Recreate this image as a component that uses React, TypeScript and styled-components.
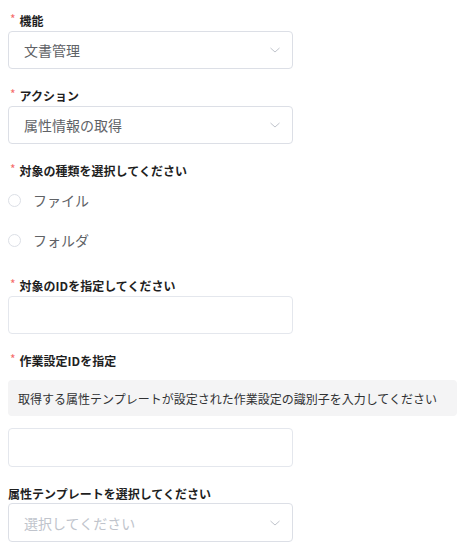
import React from "react";
import styled, { createGlobalStyle } from "styled-components";

const Global = createGlobalStyle`
  html, body { margin: 0; padding: 0; background: #fff; }
  body { font-family: "Noto Sans CJK JP", "Noto Sans", sans-serif; }
  * { box-sizing: border-box; }
`;

const Form = styled.div`
  display: flex;
  flex-direction: column;
  padding: 10px 0 0 8px;
  width: 457px;
`;

const Field = styled.div<{ $mb?: number }>`
  display: flex;
  flex-direction: column;
  margin-bottom: ${(p) => p.$mb ?? 16}px;
`;

const Label = styled.div<{ $gap?: number }>`
  display: flex;
  align-items: center;
  height: 20px;
  margin-bottom: ${(p) => p.$gap ?? 1}px;
  font-size: 12px;
  font-weight: 700;
  color: #1f1f1f;
`;

const Star = styled.span`
  color: #f56c6c;
  font-weight: 400;
  font-size: 12px;
  margin-right: 4px;
  margin-left: 2px;
  position: relative;
  top: -2px;
`;

const SelectBox = styled.div<{ $h?: number }>`
  width: 285px;
  height: ${(p) => p.$h ?? 38}px;
  border: 1px solid #dcdfe6;
  border-radius: 4px;
  display: flex;
  align-items: center;
  justify-content: space-between;
  padding: 0 11px 0 15px;
  background: #fff;
`;

const SelectText = styled.span<{ $placeholder?: boolean }>`
  font-size: 14px;
  color: ${(p) => (p.$placeholder ? "#c0c4cc" : "#606266")};
`;

const Input = styled.div<{ $h?: number }>`
  width: 285px;
  height: ${(p) => p.$h ?? 38}px;
  border: 1px solid #e4e7ed;
  border-radius: 4px;
  background: #fff;
`;

const RadioRow = styled.label`
  display: flex;
  align-items: center;
  height: 40px;
  font-size: 14px;
  color: #606266;
`;

const RadioCircle = styled.span`
  width: 13px;
  height: 13px;
  border: 1px solid #dcdfe6;
  border-radius: 50%;
  margin-right: 12px;
  background: #fff;
`;

const Hint = styled.div`
  height: 36px;
  margin-bottom: 12px;
  background: #f4f4f5;
  border-radius: 4px;
  display: flex;
  align-items: center;
  padding-left: 10px;
  font-size: 12px;
  color: #303133;
  white-space: nowrap;
`;

const Chevron = () => (
  <svg width="12" height="8" viewBox="0 0 12 8" fill="none">
    <path d="M1.5 2 L6 6 L10.5 2" stroke="#c0c4cc" strokeWidth="1" />
  </svg>
);

export default function App() {
  return (
    <>
      <Global />
      <Form>
        <Field>
          <Label><Star>*</Star>機能</Label>
          <SelectBox>
            <SelectText>文書管理</SelectText>
            <Chevron />
          </SelectBox>
        </Field>
        <Field>
          <Label><Star>*</Star>アクション</Label>
          <SelectBox>
            <SelectText>属性情報の取得</SelectText>
            <Chevron />
          </SelectBox>
        </Field>
        <Field $mb={15}>
          <Label $gap={0}><Star>*</Star>対象の種類を選択してください</Label>
          <RadioRow><RadioCircle />ファイル</RadioRow>
          <RadioRow><RadioCircle />フォルダ</RadioRow>
        </Field>
        <Field>
          <Label><Star>*</Star>対象のIDを指定してください</Label>
          <Input />
        </Field>
        <Field>
          <Label $gap={10}><Star>*</Star>作業設定IDを指定</Label>
          <Hint>取得する属性テンプレートが設定された作業設定の識別子を入力してください</Hint>
          <Input $h={39} />
        </Field>
        <Field>
          <Label $gap={0}>属性テンプレートを選択してください</Label>
          <SelectBox $h={39}>
            <SelectText $placeholder>選択してください</SelectText>
            <Chevron />
          </SelectBox>
        </Field>
      </Form>
    </>
  );
}
